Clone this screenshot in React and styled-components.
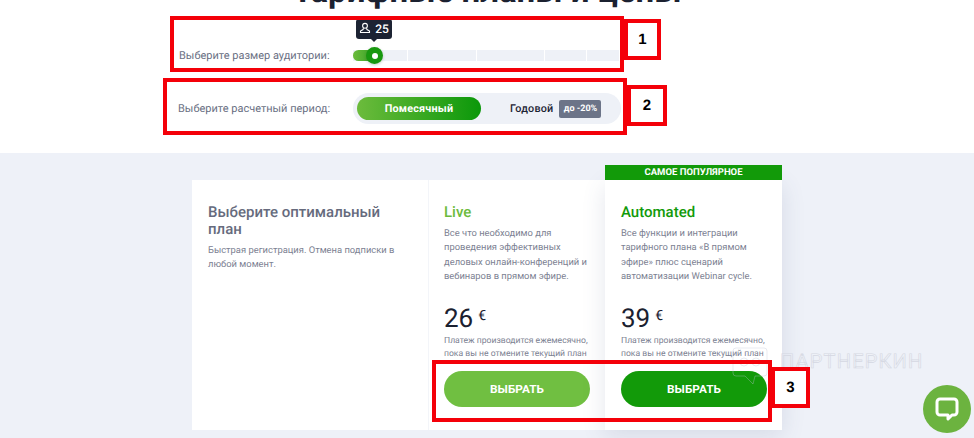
import React from "react";
import styled, { createGlobalStyle } from "styled-components";

const Global = createGlobalStyle`
  html, body { margin: 0; padding: 0; background: #fff; }
  body {
    font-family: Roboto, "Liberation Sans", sans-serif;
    text-rendering: geometricPrecision;
  }
`;

const Page = styled.div`
  position: relative;
  width: 974px;
  height: 438px;
  overflow: hidden;
  background: #fff;
`;

const Top = styled.section`
  height: 153px;
  display: flex;
  flex-direction: column;
`;

const Title = styled.h1`
  margin: -28px 0 0;
  height: 40px;
  font-size: 33px;
  line-height: 40px;
  font-weight: 700;
  color: #1b2130;
  text-align: center;
  white-space: nowrap;
`;

const Row = styled.div`
  display: flex;
  align-items: center;
  margin-left: ${(p) => p.$left}px;
  margin-top: ${(p) => p.$top}px;
  height: ${(p) => p.$height}px;
`;

const Label = styled.span`
  width: ${(p) => p.$width}px;
  flex: none;
  font-size: 11px;
  color: #6a7083;
  white-space: nowrap;
`;

const Track = styled.div`
  position: relative;
  display: flex;
  gap: 1px;
  width: 267px;
  height: 11px;
`;

const Segment = styled.div`
  width: ${(p) => p.$width}px;
  background: #eef1f7;
`;

const Fill = styled.div`
  position: absolute;
  left: 0;
  top: 0;
  width: 24px;
  height: 11px;
  border-radius: 6px 0 0 6px;
  background: linear-gradient(90deg, #6cbb3c, #2fa023);
`;

const Thumb = styled.div`
  position: absolute;
  left: 13px;
  top: -3px;
  width: 17px;
  height: 17px;
  border-radius: 50%;
  background: #18980f;
  box-shadow: 0 1px 3px rgba(30, 60, 30, 0.25);
  display: flex;
  align-items: center;
  justify-content: center;
  &::after {
    content: "";
    width: 6px;
    height: 6px;
    border-radius: 50%;
    background: #fff;
  }
`;

const Tooltip = styled.div`
  position: absolute;
  left: 3px;
  top: -31px;
  width: 36px;
  height: 20px;
  border-radius: 3px;
  background: #1c2333;
  color: #fff;
  font-size: 12px;
  font-weight: 500;
  display: flex;
  align-items: center;
  justify-content: center;
  gap: 4px;
  &::after {
    content: "";
    position: absolute;
    left: 15px;
    bottom: -3px;
    border-left: 3px solid transparent;
    border-right: 3px solid transparent;
    border-top: 3px solid #1c2333;
  }
`;

const TooltipIcon = styled.svg`
  margin-top: -3px;
`;

const Switcher = styled.div`
  width: 268px;
  height: 31px;
  box-sizing: border-box;
  padding: 4px;
  border-radius: 16px;
  background: #eef1f7;
  display: flex;
  align-items: center;
`;

const ActivePill = styled.div`
  width: 124px;
  height: 23px;
  border-radius: 12px;
  background: linear-gradient(90deg, #6cbb3c, #0b980a);
  color: #fff;
  font-size: 10.8px;
  font-weight: 700;
  letter-spacing: 0.2px;
  display: flex;
  align-items: center;
  justify-content: center;
`;

const Yearly = styled.span`
  margin-left: 29px;
  font-size: 10.8px;
  font-weight: 500;
  letter-spacing: 0.2px;
  color: #1c2333;
`;

const Badge = styled.span`
  margin-left: 6px;
  width: 42px;
  height: 18px;
  border-radius: 2px;
  background: #6c7488;
  color: #fff;
  font-size: 9px;
  font-weight: 700;
  display: flex;
  align-items: center;
  justify-content: center;
`;

const Pricing = styled.section`
  height: 285px;
  background: #eef1f8;
  display: flex;
  justify-content: center;
  padding-top: 12px;
  box-sizing: border-box;
`;

const Plans = styled.div`
  width: 590px;
  display: grid;
  grid-template-columns: 236px 177px 177px;
`;

const Column = styled.div`
  position: relative;
  margin-top: 15px;
  height: 250px;
  box-sizing: border-box;
  padding: 24px 15px 0 16px;
  background: #fff;
  display: flex;
  flex-direction: column;
  ${(p) => p.$divider && "box-shadow: inset 1px 0 0 #f3f5f9;"}
  ${(p) => p.$raised && "box-shadow: 0 6px 22px rgba(70, 85, 130, 0.14);"}
`;

const Banner = styled.div`
  position: absolute;
  left: 0;
  right: 0;
  top: -15px;
  height: 15px;
  background: #129a09;
  color: #fff;
  font-size: 9.5px;
  font-weight: 700;
  text-align: center;
  line-height: 15px;
`;

const Heading = styled.h2`
  margin: 0;
  font-size: 15px;
  line-height: 17px;
  font-weight: 500;
  color: ${(p) => p.$color};
`;

const Copy = styled.p`
  margin: 6px -2px 0 0;
  height: ${(p) => p.$height}px;
  font-size: 9.4px;
  line-height: 14.3px;
  color: #7c8192;
`;

const Price = styled.div`
  display: flex;
  align-items: flex-start;
  gap: 5px;
  height: 32px;
  margin-top: 18px;
  font-size: 26px;
  line-height: 32px;
  font-weight: 400;
  color: #1b2130;
`;

const Currency = styled.span`
  font-size: 14px;
  line-height: 26px;
`;

const Note = styled.p`
  margin: 0;
  font-size: 8.6px;
  line-height: 13px;
  color: #7c8192;
  white-space: nowrap;
`;

const Choose = styled.button`
  margin-top: 10px;
  width: 146px;
  height: 36px;
  border: 0;
  padding: 0;
  border-radius: 18px;
  background: ${(p) => p.$color};
  color: #fff;
  font-family: inherit;
  font-size: 11.8px;
  font-weight: 700;
`;

const Mark = styled.div`
  position: absolute;
  left: ${(p) => p.$x}px;
  top: ${(p) => p.$y}px;
  width: ${(p) => p.$w}px;
  height: ${(p) => p.$h}px;
  box-sizing: border-box;
  border: 4px solid #f40009;
  display: flex;
  align-items: center;
  justify-content: center;
  font-family: "Liberation Sans", sans-serif;
  font-size: 15px;
  font-weight: 700;
  color: #000;
  ${(p) => p.$filled && "background: #fff;"}
`;

const WatermarkIcon = styled.svg`
  position: absolute;
  left: 731px;
  top: 346px;
`;

const Watermark = styled.span`
  position: absolute;
  left: 780px;
  top: 350px;
  font-size: 20px;
  line-height: 22px;
  letter-spacing: 1.2px;
  color: transparent;
  -webkit-text-stroke: 0.6px #d5d8e2;
`;

const Chat = styled.div`
  position: absolute;
  left: 923px;
  top: 385px;
  width: 48px;
  height: 48px;
  border-radius: 50%;
  background: #6cb33f;
  display: flex;
  align-items: center;
  justify-content: center;
`;

const segments = [54, 68, 67, 41, 32];

export default function App() {
  return (
    <Page>
      <Global />
      <Top>
        <Title>Тарифные планы и цены</Title>
        <Row $left={179} $top={38} $height={11}>
          <Label $width={174}>Выберите размер аудитории:</Label>
          <Track>
            {segments.map((w, i) => (
              <Segment key={i} $width={w} />
            ))}
            <Fill />
            <Thumb />
            <Tooltip>
              <TooltipIcon width="12" height="12" viewBox="0 0 12 12" fill="none" stroke="#fff" strokeWidth="1.1">
                <circle cx="6" cy="3.8" r="2.4" />
                <path d="M4.5 6.2 4 7.6 1.5 9v1.5h9V9L8 7.6l-.5-1.4" />
              </TooltipIcon>
              25
            </Tooltip>
          </Track>
        </Row>
        <Row $left={178} $top={32} $height={31}>
          <Label $width={175}>Выберите расчетный период:</Label>
          <Switcher>
            <ActivePill>Помесячный</ActivePill>
            <Yearly>Годовой</Yearly>
            <Badge>до -20%</Badge>
          </Switcher>
        </Row>
      </Top>
      <Pricing>
        <Plans>
          <Column>
            <Heading $color="#666b7d">Выберите оптимальный план</Heading>
            <Copy $height={84}>Быстрая регистрация. Отмена подписки в любой момент.</Copy>
          </Column>
          <Column $divider>
            <Heading $color="#6cbb3c">Live</Heading>
            <Copy $height={58}>
              Все что необходимо для проведения эффективных деловых онлайн-конференций и вебинаров в прямом эфире.
            </Copy>
            <Price>
              26<Currency>€</Currency>
            </Price>
            <Note>
              Платеж производится ежемесячно,
              <br />
              пока вы не отмените текущий план
            </Note>
            <Choose $color="#70bf41">ВЫБРАТЬ</Choose>
          </Column>
          <Column $raised>
            <Banner>САМОЕ ПОПУЛЯРНОЕ</Banner>
            <Heading $color="#129a09">Automated</Heading>
            <Copy $height={58}>
              Все функции и интеграции тарифного плана «В прямом эфире» плюс сценарий автоматизации Webinar cycle.
            </Copy>
            <Price>
              39<Currency>€</Currency>
            </Price>
            <Note>
              Платеж производится ежемесячно,
              <br />
              пока вы не отмените текущий план
            </Note>
            <Choose $color="#129a09">ВЫБРАТЬ</Choose>
          </Column>
        </Plans>
      </Pricing>

      <WatermarkIcon width="38" height="40" viewBox="0 0 38 40" fill="none" stroke="rgba(190,196,212,0.35)" strokeWidth="1">
        <path d="M5 2h28a3 3 0 0 1 3 3v22a3 3 0 0 1-3 3H24l-2 8-8-8H5a3 3 0 0 1-3-3V5a3 3 0 0 1 3-3z" />
        <circle cx="13" cy="16" r="4" />
        <circle cx="25" cy="16" r="4" />
      </WatermarkIcon>
      <Watermark>ПАРТНЕРКИН</Watermark>

      <Mark $x={170} $y={16} $w={454} $h={56} />
      <Mark $x={624} $y={19} $w={37} $h={41} $filled>1</Mark>
      <Mark $x={163} $y={78} $w={464} $h={57} />
      <Mark $x={627} $y={85} $w={40} $h={41} $filled>2</Mark>
      <Mark $x={432} $y={360} $w={340} $h={62} />
      <Mark $x={771} $y={367} $w={39} $h={41} $filled>3</Mark>

      <Chat>
        <svg width="26" height="26" viewBox="0 0 26 26" fill="none" stroke="#fff" strokeWidth="3" strokeLinejoin="round">
          <path d="M6 3h14a3 3 0 0 1 3 3v10a3 3 0 0 1-3 3h-2l-4 4v-4H6a3 3 0 0 1-3-3V6a3 3 0 0 1 3-3z" />
        </svg>
      </Chat>
    </Page>
  );
}
